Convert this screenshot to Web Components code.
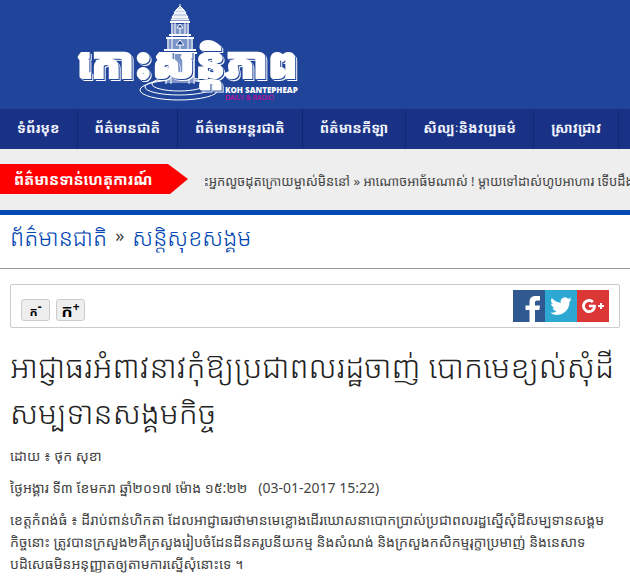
<!DOCTYPE html>
<html lang="km">
<head>
<meta charset="utf-8">
<meta name="viewport" content="width=device-width, initial-scale=1">
<title>កោះសន្តិភាព</title>
<style>
    body {
        margin: 0;
        background: #fff;
        color: #444;
        font-family: "Noto Sans", "Noto Sans Khmer", sans-serif;
        font-size: 14px;
        overflow-x: hidden;
    }
</style>
</head>
<body>
<site-header></site-header>
<site-nav>
    <nav-item href="#home">ទំព័រមុខ</nav-item>
    <nav-item href="#national">ព័ត៌មានជាតិ</nav-item>
    <nav-item href="#world">ព័ត៌មានអន្តរជាតិ</nav-item>
    <nav-item href="#sport">ព័ត៌មានកីឡា</nav-item>
    <nav-item href="#culture">សិល្បៈនិងវប្បធម៌</nav-item>
    <nav-item href="#research">ស្រាវជ្រាវ</nav-item>
</site-nav>
<news-ticker label="ព័ត៌មានទាន់ហេតុការណ៍">រះអ្នកលួចដុតក្រោយម្ចាស់មិននៅ » អាណោចអាធ័មណាស់ ! ម្តាយទៅដាស់ហូបអាហារ ទើបដឹង</news-ticker>
<bread-crumb></bread-crumb>
<main>
    <article-tools></article-tools>
    <news-article>
        <span slot="title">អាជ្ញាធរអំពាវនាវកុំឱ្យប្រជាពលរដ្ឋចាញ់ បោកមេខ្យល់សុំដី<br>សម្បទានសង្គមកិច្ច</span>
        <span slot="author">ដោយ ៖ ថុក សុខា</span>
        <span slot="date">ថ្ងៃអង្គារ ទី៣ ខែមករា ឆ្នាំ២០១៧ ម៉ោង ១៥:២២ &nbsp; (03-01-2017 15:22)</span>
        <span>ខេត្តកំពង់ធំ ៖ ដីរាប់ពាន់ហិកតា ដែលអាជ្ញាធរថាមានមេខ្លោងដើរឃោសនាបោកប្រាស់ប្រជាពលរដ្ឋស្នើសុំដីសម្បទានសង្គម<br>កិច្ចនោះ ត្រូវបានក្រសួង២គឺក្រសួងរៀបចំដែនដីនគរូបនីយកម្ម និងសំណង់ និងក្រសួងកសិកម្មរុក្ខាប្រមាញ់ និងនេសាទ<br>បដិសេធមិនអនុញ្ញាតឲ្យតាមការស្នើសុំនោះទេ ។</span>
    </news-article>
</main>

<script>
// Banner with the temple logo
class SiteHeader extends HTMLElement {
    constructor() {
        super();
        this.attachShadow({ mode: 'open' });
    }

    connectedCallback() {
        this.shadowRoot.innerHTML = `
            <style>
                :host { display: block; background: #1f4499; padding-left: 70px; }
                a { display: block; width: 240px; height: 109px; }
                svg { display: block; }
                .name {
                    font: 900 43px "Noto Sans Khmer", "Noto Sans", sans-serif;
                    filter: drop-shadow(1px 1px 0 #1f4499) drop-shadow(1px 1px 0 #fff);
                }
                .latin { font: 800 8px "Open Sans", sans-serif; fill: #fff; }
                .sub { font: 400 7px "Open Sans", sans-serif; fill: #e0009a; }
            </style>
            <a href="#home" aria-label="Koh Santepheap">
                <svg width="240" height="109" viewBox="0 0 240 109">
                    <g fill="none" stroke="#fff">
                        <ellipse cx="109" cy="90" rx="39" ry="10"/>
                        <ellipse cx="109" cy="87" rx="34" ry="8"/>
                        <ellipse cx="109" cy="84" rx="27" ry="7"/>
                    </g>
                    <path d="M110 4v3" stroke="#fff"/>
                    <path d="M106 10l4-4 4 4zM104 13l2-3h8l2 3zM102 17l3-4h10l3 4zM101 20l2-3h14l2 3z" fill="#c7d1e8" stroke="#fff"/>
                    <path d="M101 24h18v10h-18zM97 39h26v10H97zM95 53h30v30H95z" fill="#7d94c8"/>
                    <path d="M100 22h20M99 35h22M96 38h28M94 50h32M93 53h34" stroke="#fff" stroke-width="2"/>
                    <path d="M102 23v14M105 23v12M110 28v7M115 23v12M118 23v14M98 38v12M102 38v12M110 45v5M118 38v12M122 38v12M96 53v31M101 53v31M119 53v31M124 53v31" stroke="#fff"/>
                    <path d="M107 28l3-4 3 4zM106 45l4-5 4 5z" fill="#1f4499" stroke="#fff"/>
                    <text class="name" x="7" y="78" fill="#fff" stroke="#fff" stroke-width="2">កោះសន្តិភាព</text>
                    <text class="latin" x="155" y="93">KOH SANTEPHEAP</text>
                    <text class="sub" x="155" y="100">DAILY &amp; RADIO</text>
                </svg>
            </a>
        `;
    }
}
customElements.define('site-header', SiteHeader);

// Main menu bar, the entries come in through the slot
class SiteNav extends HTMLElement {
    constructor() {
        super();
        this.attachShadow({ mode: 'open' });
    }

    connectedCallback() {
        this.shadowRoot.innerHTML = `
            <style>
                :host { display: block; background: #193286; overflow: hidden; }
                nav { display: flex; height: 40px; }
            </style>
            <nav><slot></slot></nav>
        `;
    }
}
customElements.define('site-nav', SiteNav);

class NavItem extends HTMLElement {
    constructor() {
        super();
        this.attachShadow({ mode: 'open' });
    }

    connectedCallback() {
        const href = this.getAttribute('href') || '#';
        this.shadowRoot.innerHTML = `
            <style>
                :host { display: block; flex: none; border-right: 1px solid #0f2876; }
                a {
                    display: block;
                    padding: 0 17px;
                    font-size: 14px;
                    font-weight: 700;
                    line-height: 38px;
                    color: #f0f3fc;
                    text-decoration: none;
                    white-space: nowrap;
                }
            </style>
            <a href="${href}"><slot></slot></a>
        `;
    }
}
customElements.define('nav-item', NavItem);

// Breaking news strip
class NewsTicker extends HTMLElement {
    constructor() {
        super();
        this.attachShadow({ mode: 'open' });
    }

    connectedCallback() {
        const label = this.getAttribute('label') || '';
        this.shadowRoot.innerHTML = `
            <style>
                :host {
                    display: flex;
                    align-items: center;
                    gap: 17px;
                    padding: 15px 0 16px;
                    background: #eee;
                    border-bottom: 5px solid #0049b5;
                }
                .label {
                    flex: none;
                    box-sizing: border-box;
                    width: 188px;
                    padding-left: 14px;
                    background: #f00;
                    clip-path: polygon(0 0, 168px 0, 100% 50%, 170px 100%, 0 100%);
                    color: #fff;
                    font-size: 15px;
                    font-weight: 700;
                    line-height: 30px;
                    white-space: nowrap;
                }
                /* the running text is part way past the left edge */
                .track {
                    flex: 1;
                    min-width: 0;
                    padding-top: 4px;
                    overflow: hidden;
                    white-space: nowrap;
                    text-indent: -5px;
                    font-size: 13px;
                    line-height: 26px;
                }
            </style>
            <div class="label">${label}</div>
            <div class="track"><slot></slot></div>
        `;
    }
}
customElements.define('news-ticker', NewsTicker);

class BreadCrumb extends HTMLElement {
    constructor() {
        super();
        this.attachShadow({ mode: 'open' });
    }

    connectedCallback() {
        this.shadowRoot.innerHTML = `
            <style>
                :host { display: block; border-bottom: 1px solid #999; }
                nav {
                    display: flex;
                    gap: 8px;
                    padding: 0 10px 9px;
                    font-size: 23px;
                    font-weight: 300;
                    line-height: 44px;
                    white-space: nowrap;
                }
                a { color: #0046b3; text-decoration: none; }
                span { font-size: 18px; font-weight: 400; line-height: 40px; }
            </style>
            <nav>
                <a href="#national">ព័ត៌មានជាតិ</a>
                <span>»</span>
                <a href="#society">សន្តិសុខសង្គម</a>
            </nav>
        `;
    }
}
customElements.define('bread-crumb', BreadCrumb);

// Text size buttons and share links
class ArticleTools extends HTMLElement {
    constructor() {
        super();
        this.attachShadow({ mode: 'open' });
    }

    connectedCallback() {
        this.shadowRoot.innerHTML = `
            <style>
                :host {
                    display: flex;
                    justify-content: space-between;
                    margin: 15px 10px 0;
                    padding: 5px 10px;
                    border: 1px solid #ccc;
                    border-radius: 2px;
                }
                .sizes { display: flex; gap: 6px; padding-top: 9px; }
                button {
                    display: flex;
                    justify-content: center;
                    width: 29px;
                    height: 22px;
                    padding: 0;
                    border: 1px solid #ccc;
                    border-radius: 3px;
                    background: #eee;
                    color: #000;
                    font: 700 12px/24px "Noto Sans", "Noto Sans Khmer", sans-serif;
                }
                button.plus { font-size: 17px; line-height: 22px; }
                sup { font-size: 12px; line-height: 14px; }
                .share { display: flex; }
                a, svg { display: block; }
            </style>
            <div class="sizes">
                <button type="button" class="minus">ក<sup>-</sup></button>
                <button type="button" class="plus">ក<sup>+</sup></button>
            </div>
            <div class="share">
                <a href="#facebook" aria-label="Facebook">
                    <svg width="32" height="32" viewBox="0 0 32 32">
                        <rect width="32" height="32" fill="#305891"/>
                        <path fill="#fff" d="M16.500 32V20h-4v-4.500h4V12c0-4 2.400-6 6-6H27v4.500h-2.500c-2 0-2.500.8-2.500 2.300v2.700h5l-.7 4.500H22v12z"/>
                    </svg>
                </a>
                <a href="#twitter" aria-label="Twitter">
                    <svg width="32" height="32" viewBox="0 0 32 32">
                        <rect width="32" height="32" fill="#2ca8d2"/>
                        <path fill="#fff" d="M26.700 9.300c-.8.300-1.600.6-2.500.7.900-.5 1.600-1.400 1.900-2.400-.8.500-1.800.9-2.800 1.100a4.400 4.400 0 0 0-7.500 4c-3.600-.2-6.900-1.900-9-4.600a4.400 4.400 0 0 0 1.300 5.900c-.7 0-1.400-.2-2-.5v.1c0 2.100 1.500 3.900 3.500 4.300-.6.200-1.300.2-2 .1.600 1.700 2.200 3 4.100 3a8.800 8.800 0 0 1-6.500 1.800 12.400 12.400 0 0 0 19.200-11c.9-.7 1.700-1.500 2.300-2.500z"/>
                    </svg>
                </a>
                <a href="#google" aria-label="Google Plus">
                    <svg width="32" height="32" viewBox="0 0 32 32">
                        <rect width="32" height="32" fill="#db3737"/>
                        <path fill="#fff" d="M12 14.700v2.600h4c-.4 1.700-1.900 2.900-4 2.900a4.200 4.200 0 1 1 2.900-7.300l2-2A7 7 0 1 0 12 23c4.100 0 6.900-2.900 6.900-6.900l-.1-1.400zM23 13v2h-2v2h2v2h2v-2h2v-2h-2v-2z"/>
                    </svg>
                </a>
            </div>
        `;
    }
}
customElements.define('article-tools', ArticleTools);

class NewsArticle extends HTMLElement {
    constructor() {
        super();
        this.attachShadow({ mode: 'open' });
    }

    connectedCallback() {
        this.shadowRoot.innerHTML = `
            <style>
                :host { display: block; padding: 15px 10px 8px; white-space: nowrap; }
                h1 {
                    margin: 0 0 10px;
                    color: #222;
                    font-size: 31px;
                    font-weight: 300;
                    line-height: 46px;
                }
                p { margin: 0 0 10px; line-height: 22px; }
            </style>
            <h1><slot name="title"></slot></h1>
            <p><slot name="author"></slot></p>
            <p><slot name="date"></slot></p>
            <p><slot></slot></p>
        `;
    }
}
customElements.define('news-article', NewsArticle);
</script>
</body>
</html>
